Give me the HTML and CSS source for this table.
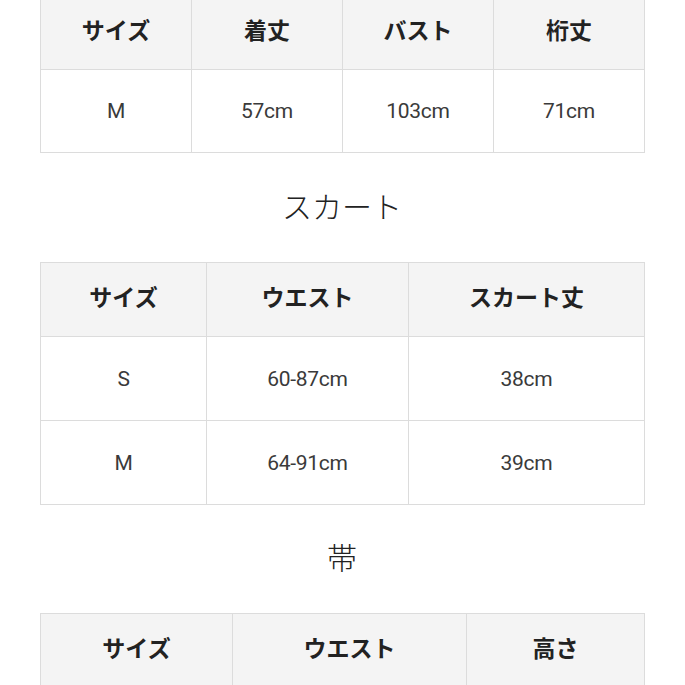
FILE: index.html
```html
<!DOCTYPE html>
<html lang="ja">
<head>
<meta charset="utf-8">
<link rel="stylesheet" href="styles.css">
</head>
<body>
<div class="page">
  <table class="size-table t1">
    <colgroup><col class="c151"><col class="c151"><col class="c151"><col class="c151"></colgroup>
    <thead><tr><th>サイズ</th><th>着丈</th><th>バスト</th><th>桁丈</th></tr></thead>
    <tbody><tr><td>M</td><td>57cm</td><td>103cm</td><td>71cm</td></tr></tbody>
  </table>

  <h2 class="section-title first">スカート</h2>

  <table class="size-table">
    <colgroup><col class="c166"><col class="c202"><col class="c236"></colgroup>
    <thead><tr><th>サイズ</th><th>ウエスト</th><th>スカート丈</th></tr></thead>
    <tbody>
      <tr><td>S</td><td>60-87cm</td><td>38cm</td></tr>
      <tr><td>M</td><td>64-91cm</td><td>39cm</td></tr>
    </tbody>
  </table>

  <h2 class="section-title second">帯</h2>

  <table class="size-table">
    <colgroup><col class="c192"><col class="c234"><col class="c178"></colgroup>
    <thead><tr><th>サイズ</th><th>ウエスト</th><th>高さ</th></tr></thead>
    <tbody>
      <tr><td>M</td><td>60-90cm</td><td>15cm</td></tr>
    </tbody>
  </table>
</div>
</body>
</html>
```

FILE: styles.css
```css
html, body {
  margin: 0;
  padding: 0;
  background: #ffffff;
}

body {
  font-family: "Noto Sans CJK JP", "Noto Sans", sans-serif;
  color: #222;
  overflow: hidden;
}

.page {
  padding: 0 41px 0 40px;
  margin-top: -5px;
}

.size-table {
  width: 604px;
  border-collapse: collapse;
  table-layout: fixed;
  border: 1px solid #dcdcdc;
}

.c151 { width: 151px; }
.c166 { width: 166px; }
.c202 { width: 202px; }
.c236 { width: 236px; }
.c192 { width: 192px; }
.c234 { width: 234px; }
.c178 { width: 178px; }

.size-table th,
.size-table td {
  border: 1px solid #dcdcdc;
  text-align: center;
  vertical-align: middle;
  padding: 0;
}

.size-table th {
  height: 74px;
  padding-bottom: 7px;
  box-sizing: border-box;
  background: #f4f4f4;
  font-family: "Noto Sans CJK JP", sans-serif;
  font-weight: 700;
  font-size: 23px;
  color: #222;
}

.size-table td {
  height: 83px;
  background: #fff;
  font-family: Roboto, "Liberation Sans", sans-serif;
  font-weight: 400;
  font-size: 21px;
  color: #3a3a3a;
  letter-spacing: -0.3px;
}

.t1 td {
  height: 82px;
}

.section-title {
  margin: 0;
  text-align: center;
  font-family: "Noto Sans CJK JP", sans-serif;
  font-weight: 300;
  font-size: 30px;
  line-height: 40px;
  color: #222;
}

.section-title.first {
  margin: 32px 0 37px;
}

.section-title.second {
  margin: 31px 0 37px;
}
```
